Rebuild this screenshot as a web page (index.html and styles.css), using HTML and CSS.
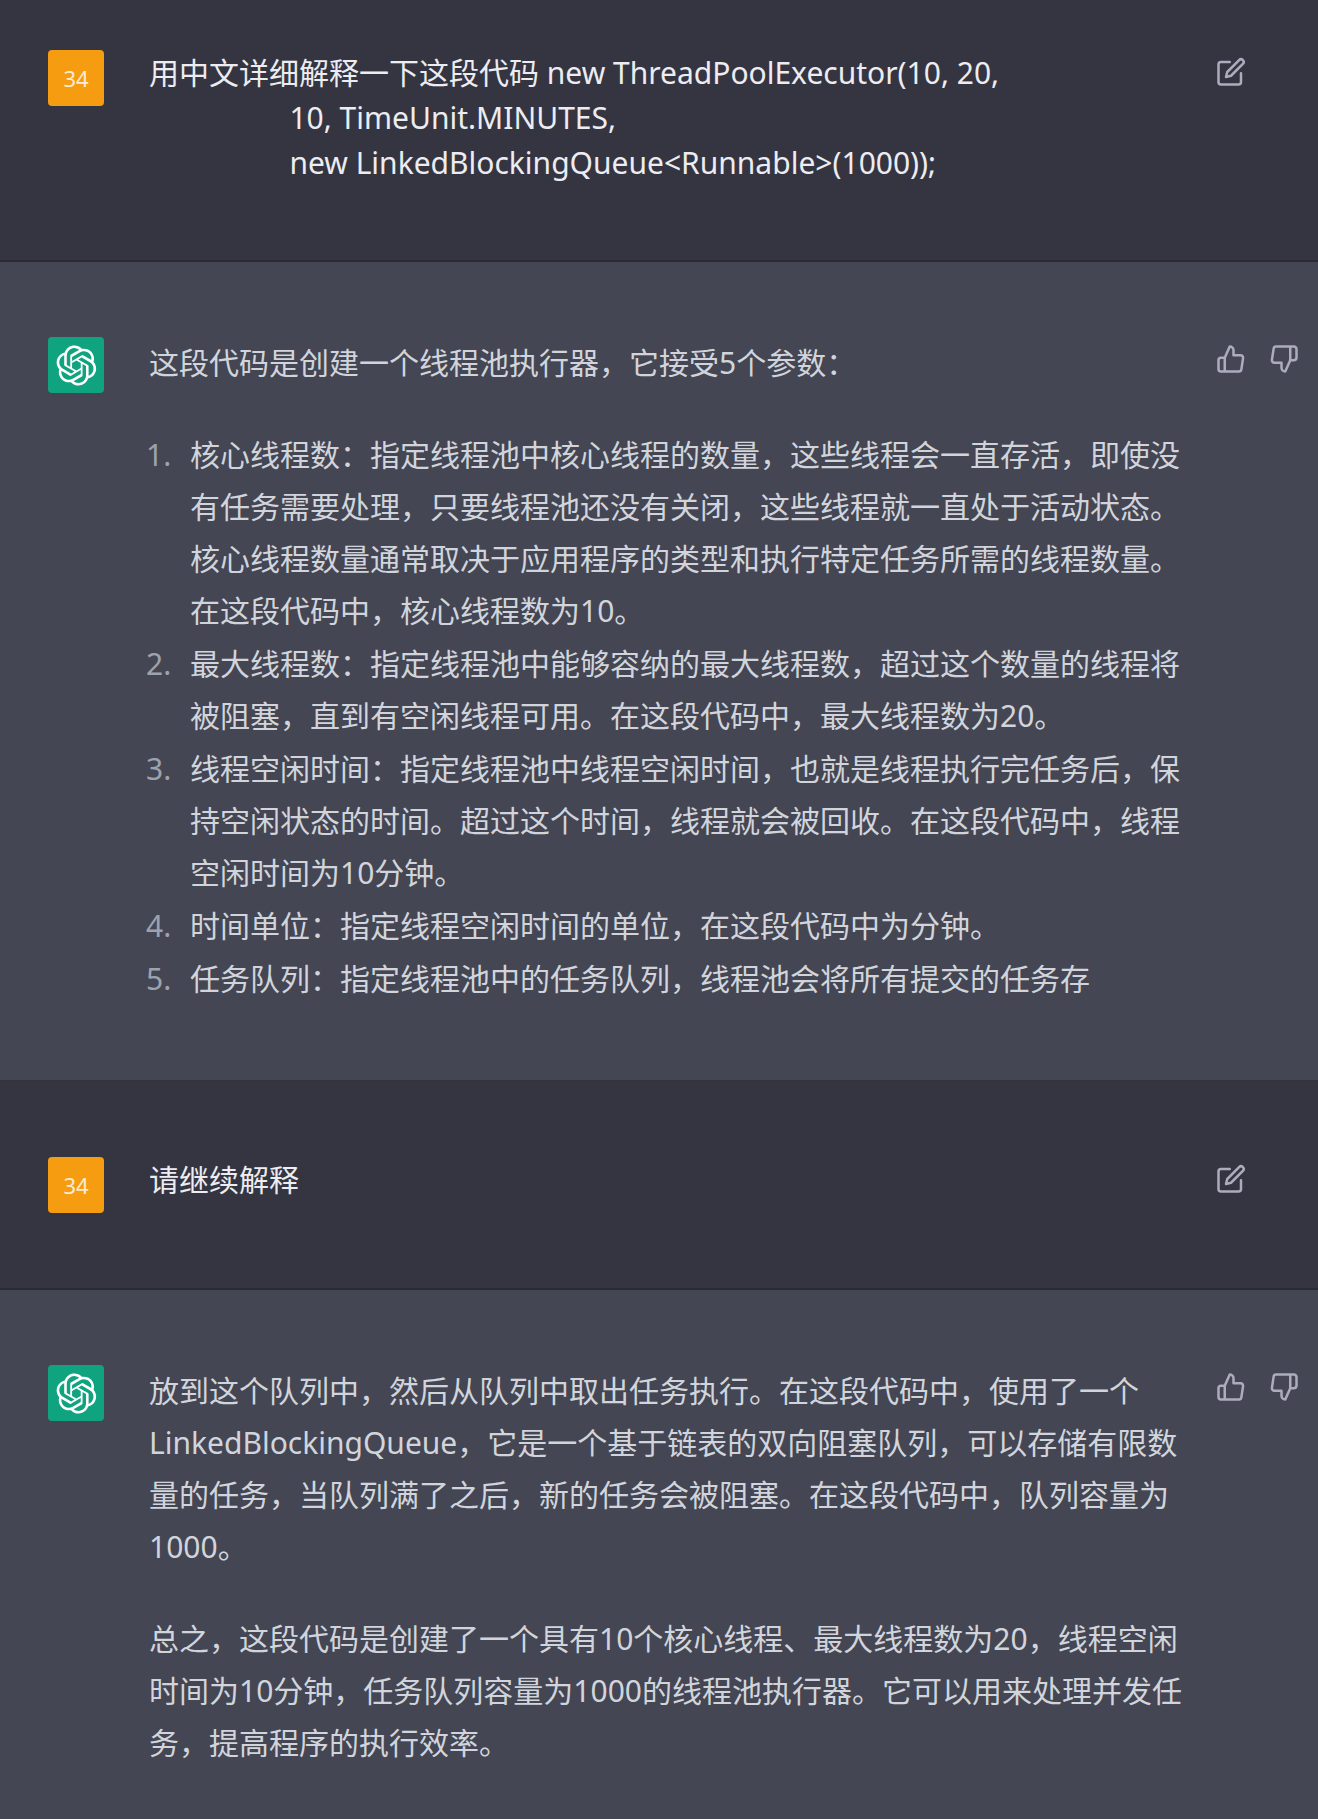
FILE: index.html
```html
<!DOCTYPE html>
<html lang="zh-CN">
<head>
  <meta charset="UTF-8">
  <meta name="viewport" content="width=device-width, initial-scale=1.0">
  <title>线程池代码解释</title>
  <link rel="stylesheet" href="styles.css">
</head>
<body>
  <!-- Shared icons -->
  <svg class="sprite" aria-hidden="true">
    <symbol id="icon-edit" viewBox="0 0 24 24">
      <path d="M11 4H4a2 2 0 0 0-2 2v14a2 2 0 0 0 2 2h14a2 2 0 0 0 2-2v-7"/>
      <path d="M18.5 2.5a2.121 2.121 0 0 1 3 3L12 15l-4 1 1-4 9.5-9.5z"/>
    </symbol>
    <symbol id="icon-up" viewBox="0 0 24 24">
      <path d="M14 9V5a3 3 0 0 0-3-3l-4 9v11h11.28a2 2 0 0 0 2-1.7l1.38-9a2 2 0 0 0-2-2.3zM7 22H4a2 2 0 0 1-2-2v-7a2 2 0 0 1 2-2h3"/>
    </symbol>
    <symbol id="icon-down" viewBox="0 0 24 24">
      <path d="M10 15v4a3 3 0 0 0 3 3l4-9V2H5.72a2 2 0 0 0-2 1.7l-1.38 9a2 2 0 0 0 2 2.3zm7-13h2.67A2.31 2.31 0 0 1 22 4v7a2.31 2.31 0 0 1-2.33 2H17"/>
    </symbol>
    <symbol id="icon-logo" viewBox="0 0 41 41">
      <path d="M37.5324 16.8707C37.9808 15.5241 38.1363 14.0974 37.9886 12.6859C37.8409 11.2744 37.3934 9.91076 36.676 8.68622C35.6126 6.83404 33.9882 5.3676 32.0373 4.4985C30.0864 3.62941 27.9098 3.40259 25.8215 3.85078C24.8796 2.7893 23.7219 1.94125 22.4257 1.36341C21.1295 0.785575 19.7249 0.491269 18.3058 0.500197C16.1708 0.495044 14.0893 1.16803 12.3614 2.42214C10.6335 3.67624 9.34853 5.44666 8.6917 7.47815C7.30085 7.76286 5.98686 8.3414 4.8377 9.17505C3.68854 10.0087 2.73073 11.0782 2.02839 12.312C0.956464 14.1591 0.498905 16.2988 0.721698 18.4228C0.944492 20.5467 1.83612 22.5449 3.268 24.1293C2.81966 25.4759 2.66413 26.9026 2.81182 28.3141C2.95951 29.7256 3.40701 31.0892 4.12437 32.3138C5.18791 34.1659 6.8123 35.6322 8.76321 36.5013C10.7141 37.3704 12.8907 37.5973 14.9789 37.1492C15.9208 38.2107 17.0786 39.0587 18.3747 39.6366C19.6709 40.2144 21.0755 40.5087 22.4946 40.4998C24.6307 40.5054 26.7133 39.8321 28.4418 38.5772C30.1704 37.3223 31.4556 35.5506 32.1119 33.5179C33.5027 33.2332 34.8167 32.6547 35.9659 31.821C37.115 30.9874 38.0728 29.9178 38.7752 28.684C39.8458 26.8371 40.3023 24.6979 40.0789 22.5748C39.8556 20.4517 38.9639 18.4544 37.5324 16.8707ZM22.4978 37.8849C20.7443 37.8874 19.0459 37.2733 17.6994 36.1501C17.7601 36.117 17.8666 36.0586 17.936 36.0161L25.9004 31.4156C26.1003 31.3019 26.2663 31.137 26.3813 30.9378C26.4964 30.7386 26.5563 30.5124 26.5549 30.2825V19.0542L29.9213 20.998C29.9389 21.0068 29.9541 21.0198 29.9656 21.0359C29.977 21.052 29.9842 21.0707 29.9867 21.0902V30.3889C29.9842 32.375 29.1946 34.2791 27.7909 35.6841C26.3872 37.0892 24.4838 37.8806 22.4978 37.8849ZM6.39227 31.0064C5.51397 29.4888 5.19742 27.7107 5.49804 25.9832C5.55718 26.0187 5.66048 26.0818 5.73461 26.1244L13.699 30.7248C13.8975 30.8408 14.1233 30.902 14.3532 30.902C14.583 30.902 14.8088 30.8408 15.0073 30.7248L24.731 25.1103V28.9979C24.7321 29.0177 24.7283 29.0376 24.7199 29.0556C24.7115 29.0736 24.6988 29.0893 24.6829 29.1012L16.6317 33.7497C14.9096 34.7416 12.8643 35.0097 10.9447 34.4954C9.02506 33.9811 7.38785 32.7263 6.39227 31.0064ZM4.29707 13.6194C5.17156 12.0998 6.55279 10.9364 8.19885 10.3327C8.19885 10.4013 8.19491 10.5228 8.19491 10.6071V19.808C8.19351 20.0378 8.25334 20.2638 8.36823 20.4629C8.48312 20.6619 8.64893 20.8267 8.84863 20.9404L18.5723 26.5542L15.206 28.4979C15.1894 28.5089 15.1703 28.5155 15.1505 28.5173C15.1307 28.5191 15.1107 28.516 15.0924 28.5082L7.04046 23.8557C5.32135 22.8601 4.06716 21.2235 3.55289 19.3046C3.03862 17.3858 3.30624 15.3413 4.29707 13.6194ZM31.955 20.0556L22.2312 14.4411L25.5976 12.4981C25.6142 12.4872 25.6333 12.4805 25.6531 12.4787C25.6729 12.4769 25.6928 12.4801 25.7111 12.4879L33.7631 17.1364C34.9967 17.849 36.0017 18.8982 36.6606 20.1613C37.3194 21.4244 37.6047 22.849 37.4832 24.2684C37.3617 25.6878 36.8382 27.0432 35.9743 28.1759C35.1103 29.3086 33.9415 30.1717 32.6047 30.6641C32.6047 30.5947 32.6047 30.4733 32.6047 30.3889V21.188C32.6066 20.9586 32.5474 20.7328 32.4332 20.5338C32.319 20.3348 32.154 20.1698 31.955 20.0556ZM35.3055 15.0128C35.2464 14.9765 35.1431 14.9142 35.069 14.8717L27.1045 10.2712C26.906 10.1554 26.6803 10.0943 26.4504 10.0943C26.2206 10.0943 25.9948 10.1554 25.7963 10.2712L16.0726 15.8858V11.9982C16.0715 11.9783 16.0753 11.9585 16.0837 11.9405C16.0921 11.9225 16.1048 11.9068 16.1207 11.8949L24.1719 7.25025C25.4053 6.53903 26.8158 6.19376 28.2383 6.25482C29.6608 6.31589 31.0364 6.78077 32.2044 7.59508C33.3723 8.40939 34.2842 9.53945 34.8334 10.8531C35.3826 12.1667 35.5464 13.6095 35.3055 15.0128ZM14.2424 21.9419L10.8752 19.9981C10.8576 19.9893 10.8423 19.9763 10.8309 19.9602C10.8195 19.9441 10.8122 19.9254 10.8098 19.9058V10.6071C10.8107 9.18295 11.2173 7.78848 11.9819 6.58696C12.7466 5.38544 13.8377 4.42659 15.1275 3.82264C16.4173 3.21869 17.8524 2.99464 19.2649 3.1767C20.6775 3.35876 22.0089 3.93941 23.1034 4.85067C23.0427 4.88379 22.937 4.94215 22.8668 4.98473L14.9024 9.58517C14.7025 9.69878 14.5366 9.86356 14.4215 10.0626C14.3065 10.2616 14.2466 10.4877 14.2479 10.7175L14.2424 21.9419ZM16.071 17.9991L20.4018 15.4978L24.7325 17.9975V22.9985L20.4018 25.4983L16.071 22.9985V17.9991Z"/>
    </symbol>
  </svg>

  <main class="chat">
    <!-- Question 1 -->
    <section class="message user first">
      <div class="avatar">34</div>
      <div class="content">
        <div class="prompt">用中文详细解释一下这段代码 new ThreadPoolExecutor(10, 20,
                  10, TimeUnit.MINUTES,
                  new LinkedBlockingQueue&lt;Runnable&gt;(1000));</div>
      </div>
      <div class="actions">
        <button class="icon-btn" type="button" aria-label="编辑"><svg class="icon"><use href="#icon-edit"/></svg></button>
      </div>
    </section>

    <!-- Answer 1 -->
    <section class="message assistant">
      <div class="avatar"><svg class="logo"><use href="#icon-logo"/></svg></div>
      <div class="content">
        <p>这段代码是创建一个线程池执行器，它接受5个参数：</p>
        <ol>
          <li>核心线程数：指定线程池中核心线程的数量，这些线程会一直存活，即使没有任务需要处理，只要线程池还没有关闭，这些线程就一直处于活动状态。核心线程数量通常取决于应用程序的类型和执行特定任务所需的线程数量。在这段代码中，核心线程数为10。</li>
          <li>最大线程数：指定线程池中能够容纳的最大线程数，超过这个数量的线程将被阻塞，直到有空闲线程可用。在这段代码中，最大线程数为20。</li>
          <li>线程空闲时间：指定线程池中线程空闲时间，也就是线程执行完任务后，保持空闲状态的时间。超过这个时间，线程就会被回收。在这段代码中，线程空闲时间为10分钟。</li>
          <li>时间单位：指定线程空闲时间的单位，在这段代码中为分钟。</li>
          <li>任务队列：指定线程池中的任务队列，线程池会将所有提交的任务存</li>
        </ol>
      </div>
      <div class="actions">
        <button class="icon-btn" type="button" aria-label="赞"><svg class="icon"><use href="#icon-up"/></svg></button>
        <button class="icon-btn" type="button" aria-label="踩"><svg class="icon"><use href="#icon-down"/></svg></button>
      </div>
    </section>

    <!-- Question 2 -->
    <section class="message user">
      <div class="avatar">34</div>
      <div class="content">
        <div class="prompt">请继续解释</div>
      </div>
      <div class="actions">
        <button class="icon-btn" type="button" aria-label="编辑"><svg class="icon"><use href="#icon-edit"/></svg></button>
      </div>
    </section>

    <!-- Answer 2 -->
    <section class="message assistant last">
      <div class="avatar"><svg class="logo"><use href="#icon-logo"/></svg></div>
      <div class="content">
        <p>放到这个队列中，然后从队列中取出任务执行。在这段代码中，使用了一个LinkedBlockingQueue，它是一个基于链表的双向阻塞队列，可以存储有限数量的任务，当队列满了之后，新的任务会被阻塞。在这段代码中，队列容量为1000。</p>
        <p>总之，这段代码是创建了一个具有10个核心线程、最大线程数为20，线程空闲时间为10分钟，任务队列容量为1000的线程池执行器。它可以用来处理并发任务，提高程序的执行效率。</p>
      </div>
      <div class="actions">
        <button class="icon-btn" type="button" aria-label="赞"><svg class="icon"><use href="#icon-up"/></svg></button>
        <button class="icon-btn" type="button" aria-label="踩"><svg class="icon"><use href="#icon-down"/></svg></button>
      </div>
    </section>
  </main>
</body>
</html>
```

FILE: styles.css
```css
:root {
  --user-bg: #343541;
  --assistant-bg: #444654;
  --line: rgba(32, 33, 35, 0.5);
  --user-text: #ececf1;
  --assistant-text: #d1d5db;
  --marker: #9ca3af;
  --icon: #acacbe;
  --orange: #f59c11;
  --green: #10a37f;
}

* {
  margin: 0;
  padding: 0;
  box-sizing: border-box;
}

body {
  background: var(--assistant-bg);
  color: var(--assistant-text);
  font-family: "Noto Sans", "Noto Sans CJK SC", sans-serif;
  font-size: 30px;
  line-height: 52px;
}

.sprite {
  display: none;
}

/* Messages */
.message {
  display: flex;
  align-items: flex-start;
  padding: 75px 12px 75px 48px;
  border-bottom: 2px solid var(--line);
}

.message.user {
  background: var(--user-bg);
  color: var(--user-text);
}

.message.assistant {
  background: var(--assistant-bg);
}

.message.first {
  padding-top: 50px;
}

.message.last {
  padding-bottom: 45px;
  border-bottom: none;
}

.avatar {
  display: flex;
  align-items: center;
  justify-content: center;
  flex-shrink: 0;
  width: 56px;
  height: 56px;
  margin-right: 45px;
  border-radius: 4px;
  background: var(--green);
  color: #fff;
  font-size: 22px;
}

.user .avatar {
  background: var(--orange);
  color: #fdebd0;
}

.logo {
  width: 41px;
  height: 41px;
  fill: currentColor;
}

.content {
  flex: 1;
  min-width: 0;
}

.prompt {
  min-height: 56px;
  line-height: 45px;
  white-space: pre-wrap;
}

.content p + p,
.content ol {
  margin-top: 40px;
}

.content ol {
  padding-left: 30px;
}

.content li {
  padding-left: 11px;
}

.content li + li {
  margin-top: 1px;
}

.content li::marker {
  color: var(--marker);
}

/* Action buttons */
.actions {
  display: flex;
  flex-shrink: 0;
  gap: 9px;
  width: 97px;
  margin-left: 15px;
}

.icon-btn {
  display: flex;
  padding: 7px;
  border: none;
  border-radius: 6px;
  background: none;
  color: var(--icon);
  cursor: pointer;
}

.icon-btn:hover {
  color: var(--user-text);
}

.icon {
  width: 30px;
  height: 30px;
  fill: none;
  stroke: currentColor;
  stroke-width: 2;
  stroke-linecap: round;
  stroke-linejoin: round;
}
```
